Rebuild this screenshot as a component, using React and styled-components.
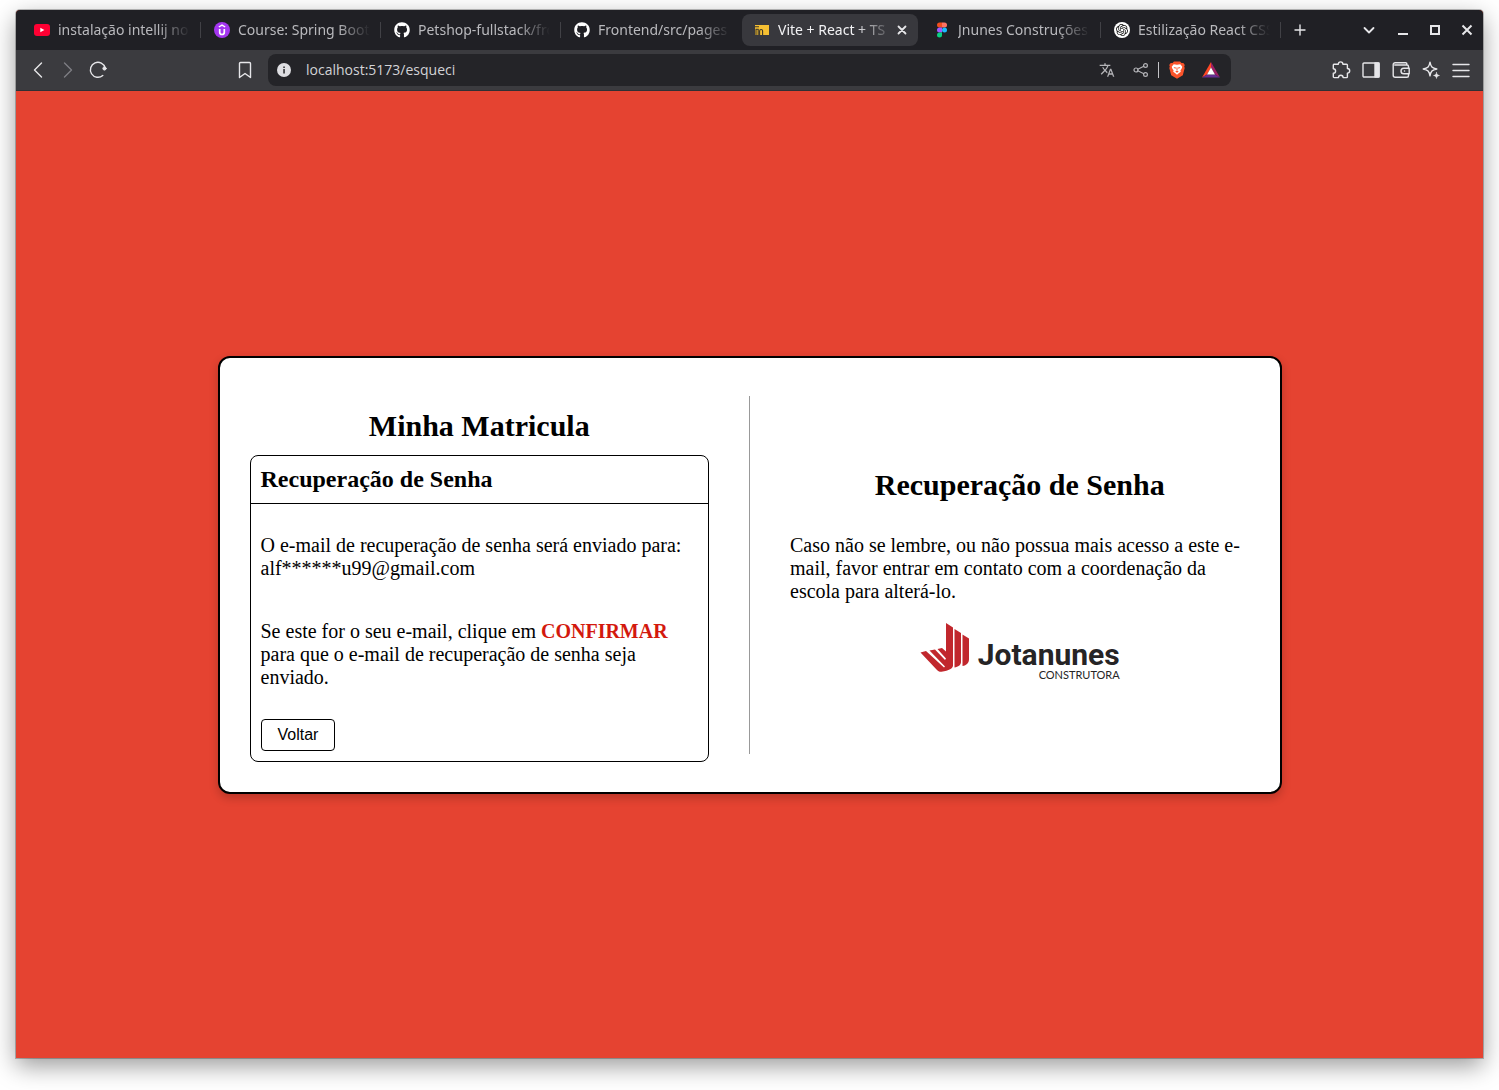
import React from "react";
import styled, { createGlobalStyle } from "styled-components";
import { FaGithub } from "react-icons/fa";
import { SiOpenai } from "react-icons/si";
import { MdTranslate } from "react-icons/md";

const GlobalStyle = createGlobalStyle`
  *, *::before, *::after { box-sizing: border-box; }
  body { margin: 0; background: #fff; font-family: "Liberation Serif", "Times New Roman", serif; color: #000; }
  h1, h2, p { margin: 0; }
  button, input { font: inherit; }
`;

const Desktop = styled.div`
  display: flex;
  min-height: 100vh;
  padding: 10px 16px 32px;
`;

const Window = styled.div`
  flex: 1;
  min-width: 0;
  display: flex;
  flex-direction: column;
  overflow: hidden;
  border-radius: 4px 4px 0 0;
  box-shadow: 0 0 0 1px rgba(0, 0, 0, 0.24), 0 8px 24px rgba(0, 0, 0, 0.4);
  background: #e54331;
`;

const TabStrip = styled.header`
  display: flex;
  align-items: center;
  height: 40px;
  background: #202025;
  font-family: "Noto Sans", "Open Sans", sans-serif;
  font-size: 14px;
`;

const TabList = styled.nav`
  display: flex;
  align-items: center;
  padding-left: 6px;
  min-width: 0;
`;

const Tab = styled.a`
  display: flex;
  align-items: center;
  gap: 8px;
  width: 180px;
  height: 32px;
  padding: 0 12px;
  color: #b9b9bd;
  text-decoration: none;
`;

const ActiveTab = styled.div`
  display: flex;
  align-items: center;
  width: 176px;
  height: 32px;
  margin-right: 4px;
  padding: 0 8px 0 12px;
  border-radius: 8px;
  background: #38383d;
  color: #f2f2f4;
`;

const ActiveLink = styled.a`
  flex: 1;
  min-width: 0;
  display: flex;
  align-items: center;
  gap: 8px;
  color: inherit;
  text-decoration: none;
`;

const TabTitle = styled.span`
  flex: 1;
  min-width: 0;
  overflow: hidden;
  white-space: nowrap;
  line-height: 20px;
  mask-image: linear-gradient(to right, #000 calc(100% - ${(p) => p.$fade || 32}px), transparent);
`;

const TabDivider = styled.span`
  width: 1px;
  height: 16px;
  margin: 0 1px 0 -2px;
  background: #414146;
`;

const Favicon = styled.svg`
  flex: none;
  width: 16px;
  height: 16px;
`;

const IconButton = styled.button`
  display: flex;
  align-items: center;
  justify-content: center;
  flex: none;
  width: ${(p) => p.$size || 30}px;
  height: ${(p) => p.$size || 30}px;
  padding: 0;
  border: 0;
  background: none;
  color: ${(p) => p.$color || "#e6e6e9"};
`;

const WindowControls = styled.div`
  display: flex;
  align-items: center;
  margin-left: auto;
`;

const Toolbar = styled.div`
  display: flex;
  align-items: center;
  height: 41px;
  padding: 0 7px;
  background: #3b3b3f;
  border-bottom: 1px solid #303034;
`;

const ToolGroup = styled.div`
  flex: 1 1 0;
  display: flex;
  justify-content: ${(p) => (p.$end ? "flex-end" : "flex-start")};
`;

const NavSpacer = styled.span`
  flex: 1;
`;

const AddressBar = styled.form`
  flex: 0 1 963px;
  min-width: 0;
  display: flex;
  align-items: center;
  height: 32px;
  margin: 0 8px;
  padding: 0 3px 0 9px;
  border-radius: 8px;
  background: #242428;
`;

const AddressInput = styled.input`
  flex: 1;
  min-width: 0;
  margin-left: 15px;
  padding: 0;
  border: 0;
  outline: 0;
  background: none;
  color: #d2d2d6;
  font-family: "Open Sans", "Noto Sans", sans-serif;
  font-size: 14px;
  line-height: 20px;
`;

const AddressDivider = styled.span`
  width: 1px;
  height: 16px;
  margin-right: 1px;
  background: #c4c4c8;
`;

const Page = styled.main`
  flex: 1;
  display: flex;
  align-items: center;
  justify-content: center;
  padding: 24px;
  background: #e54331;
`;

const Card = styled.div`
  display: flex;
  width: 100%;
  max-width: 1064px;
  padding: 30px;
  border: 2px solid #000;
  border-radius: 12px;
  background: #fff;
  box-shadow: 0 4px 10px rgba(0, 0, 0, 0.2);
`;

const Column = styled.section`
  flex: 1 1 0;
  min-width: 0;
  display: flex;
  flex-direction: column;
  justify-content: ${(p) => (p.$centered ? "center" : "flex-start")};
`;

const Divider = styled.hr`
  width: 1px;
  margin: 8px 40px;
  border: 0;
  background: #999;
`;

const Title = styled.h1`
  font-size: 30px;
  line-height: 35px;
  text-align: center;
  margin: ${(p) => p.$margin};
`;

const Panel = styled.div`
  border: 1px solid #000;
  border-radius: 8px;
`;

const PanelTitle = styled.h2`
  padding: 10px;
  border-bottom: 1px solid #000;
  font-size: 24px;
  line-height: 27px;
`;

const PanelBody = styled.div`
  padding: 10px;
`;

const Text = styled.p`
  font-size: 20px;
  line-height: normal;
  margin: ${(p) => p.$margin || "0"};
`;

const Emphasis = styled.strong`
  color: #d3190d;
`;

const BackButton = styled.button`
  height: 32px;
  padding: 0 16px;
  border: 1px solid #000;
  border-radius: 4px;
  background: #fff;
  color: #000;
  font-family: "Liberation Sans", Arial, sans-serif;
  font-size: 16px;
`;

const Brand = styled.div`
  display: flex;
  justify-content: center;
  gap: 8px;
  height: 60px;
`;

const BrandMark = styled.svg`
  width: 50px;
  height: 50px;
`;

const Wordmark = styled.div`
  display: flex;
  flex-direction: column;
  align-items: flex-end;
  padding-top: 18px;
  color: #262425;
`;

const BrandName = styled.span`
  font-family: Roboto, sans-serif;
  font-weight: 700;
  font-size: 30px;
  line-height: 28px;
`;

const BrandKind = styled.span`
  font-family: Lato, sans-serif;
  font-size: 11px;
  line-height: 12px;
`;

const line = { fill: "none", stroke: "currentColor", strokeLinecap: "round", strokeLinejoin: "round" };

const YouTubeIcon = () => (
  <Favicon viewBox="0 0 16 16" aria-hidden="true">
    <rect y="2" width="16" height="12" rx="3" fill="#ff0033" />
    <path d="M6.300 5.700v4.600L10.400 8z" fill="#fff" />
  </Favicon>
);

const UdemyIcon = () => (
  <Favicon viewBox="0 0 16 16" aria-hidden="true">
    <circle cx="8" cy="8" r="8" fill="#a435f0" />
    <path d="M4.800 5 8 3.100 11.200 5" fill="none" stroke="#fff" strokeWidth="1.300" />
    <path d="M5.700 7v3.200a2.300 2.300 0 0 0 4.600 0V7" fill="none" stroke="#fff" strokeWidth="1.700" />
  </Favicon>
);

const GithubIcon = () => <Favicon as={FaGithub} color="#fff" aria-hidden="true" />;

const ViteIcon = () => (
  <Favicon viewBox="0 0 16 16" aria-hidden="true">
    <path d="M1 3h14v10H1z" fill="#f5bf32" />
    <path d="M1 4.800h4M2 13V7.200h2.200V13M5.600 13V9a1.500 1.500 0 0 1 3 0v4" fill="none" stroke="#38342b" strokeWidth="1.100" />
  </Favicon>
);

const FigmaIcon = () => (
  <Favicon viewBox="0 0 16 16" aria-hidden="true">
    <path d="M8 .5H5.500a2.500 2.500 0 0 0 0 5H8z" fill="#f24e1e" />
    <path d="M8 .5h2.500a2.500 2.500 0 0 1 0 5H8z" fill="#ff7262" />
    <path d="M8 5.500H5.500a2.500 2.500 0 0 0 0 5H8z" fill="#a259ff" />
    <circle cx="10.500" cy="8" r="2.500" fill="#1abcfe" />
    <path d="M5.500 10.500H8V13a2.500 2.500 0 1 1-2.500-2.500z" fill="#0acf83" />
  </Favicon>
);

const OpenAiBadge = styled.span`
  display: flex;
  align-items: center;
  justify-content: center;
  flex: none;
  width: 16px;
  height: 16px;
  border-radius: 50%;
  background: #fff;
  color: #111;
`;

const OpenAiIcon = () => (
  <OpenAiBadge>
    <SiOpenai size={12} aria-hidden="true" />
  </OpenAiBadge>
);

const Glyph = ({ size = 20, children }) => (
  <svg width={size} height={size} viewBox={`0 0 ${size} ${size}`} strokeWidth="1.4" {...line} aria-hidden="true">
    {children}
  </svg>
);

const InfoIcon = () => (
  <svg width="14" height="14" viewBox="0 0 14 14" aria-hidden="true">
    <circle cx="7" cy="7" r="7" fill="#dedee2" />
    <path d="M6.200 3.500h1.700v1.500H6.200zM6.200 6h1.700v4.500H6.200z" fill="#3b3b3f" />
  </svg>
);

const BraveIcon = () => (
  <svg width="16" height="18" viewBox="0 0 16 18" aria-hidden="true">
    <path d="M5 .5h6l1.500 1.600 1.800-.2 1.500 2-.6 1.700.5 1.500-1.900 7.200L8 17.800l-5.800-3.500L.3 7.100l.5-1.500L.2 3.900l1.500-2 1.800.2z" fill="#fb542b" />
    <path d="M4.700 3.200 8 3.700l3.300-.5 2 2.500-.6 1.700-1.300 2 .4 1.300-1.800 1.300L8 13.700 6 12 4.200 10.700l.4-1.300-1.300-2-.6-1.700z" fill="#fff" />
    <path d="M4.500 6 7 6.500l-.8 1.500zM11.500 6 9 6.500l.8 1.500zM7.500 6.500h1v3h-1zM6.200 10.600 8 9.800l1.800.8L8 11.700z" fill="#fb542b" />
  </svg>
);

const BatIcon = () => (
  <svg width="18" height="16" viewBox="0 0 18 16" aria-hidden="true">
    <path d="M9 0 0 15.500l5-3L9 5.500z" fill="#ff4724" />
    <path d="M9 0l9 15.500-5-3L9 5.500z" fill="#9e1f63" />
    <path d="M0 15.500h18l-5-3H5z" fill="#662d91" />
    <path d="M9 5.500 5 12.500h8z" fill="#fff" />
  </svg>
);

const tabsBefore = [
  { title: "instalação intellij no ubuntu", Icon: YouTubeIcon },
  { title: "Course: Spring Boot 3", Icon: UdemyIcon },
  { title: "Petshop-fullstack/frontend", Icon: GithubIcon },
  { title: "Frontend/src/pages at", Icon: GithubIcon, last: true },
];

const tabsAfter = [
  { title: "Jnunes Construções", Icon: FigmaIcon },
  { title: "Estilização React CSS", Icon: OpenAiIcon },
];

const BrowserTab = ({ title, Icon, last }) => (
  <>
    <Tab href="#">
      <Icon />
      <TabTitle>{title}</TabTitle>
    </Tab>
    {!last && <TabDivider />}
  </>
);

const Tabs = () => (
  <TabStrip>
    <TabList aria-label="Abas">
      {tabsBefore.map((tab) => (
        <BrowserTab key={tab.title} {...tab} />
      ))}
      <ActiveTab>
        <ActiveLink href="#">
          <ViteIcon />
          <TabTitle $fade={40}>Vite + React + TS</TabTitle>
        </ActiveLink>
        <IconButton $size={16} aria-label="Fechar aba">
          <Glyph size={16}>
            <path d="M4.500 4.500l7 7m0-7l-7 7" strokeWidth="1.800" />
          </Glyph>
        </IconButton>
      </ActiveTab>
      {tabsAfter.map((tab) => (
        <BrowserTab key={tab.title} {...tab} />
      ))}
    </TabList>
    <IconButton $size={36} aria-label="Nova aba">
      <Glyph><path d="M10 5v10M5 10h10" /></Glyph>
    </IconButton>
    <WindowControls>
      <IconButton $size={36} aria-label="Pesquisar abas">
        <Glyph><path d="M5.500 8l4.500 4.500L14.500 8" strokeWidth="1.800" /></Glyph>
      </IconButton>
      <IconButton $size={32} aria-label="Minimizar">
        <Glyph><path d="M5 14h10" strokeWidth="2" strokeLinecap="butt" /></Glyph>
      </IconButton>
      <IconButton $size={32} aria-label="Maximizar">
        <Glyph><path d="M6 6h8v8H6z" strokeWidth="2" strokeLinejoin="miter" /></Glyph>
      </IconButton>
      <IconButton $size={32} aria-label="Fechar">
        <Glyph><path d="M5.500 5.500l9 9m0-9l-9 9" strokeWidth="2" strokeLinecap="butt" /></Glyph>
      </IconButton>
    </WindowControls>
  </TabStrip>
);

const NavigationBar = () => (
  <Toolbar>
    <ToolGroup>
      <IconButton aria-label="Voltar página">
        <Glyph><path d="M13.500 3 6.500 10l7 7" /></Glyph>
      </IconButton>
      <IconButton $color="#7e7e83" aria-label="Avançar página">
        <Glyph><path d="M6.500 3l7 7-7 7" /></Glyph>
      </IconButton>
      <IconButton aria-label="Recarregar">
        <Glyph>
          <path d="M14.800 15.500A7.500 7.500 0 1 1 17.200 8" />
          <circle cx="16.500" cy="8.500" r="1.600" fill="currentColor" strokeWidth="1" />
        </Glyph>
      </IconButton>
      <NavSpacer />
      <IconButton aria-label="Adicionar aos favoritos">
        <Glyph><path d="M4.500 3.500a1 1 0 0 1 1-1h9a1 1 0 0 1 1 1v14L10 13.500l-5.500 4z" /></Glyph>
      </IconButton>
    </ToolGroup>
    <AddressBar>
      <InfoIcon />
      <AddressInput aria-label="Endereço" defaultValue="localhost:5173/esqueci" />
      <IconButton $size={34} $color="#b4b4b8" type="button" aria-label="Traduzir">
        <MdTranslate size={16} />
      </IconButton>
      <IconButton $size={34} $color="#b4b4b8" type="button" aria-label="Compartilhar">
        <Glyph size={16}>
          <g strokeWidth="1.200">
            <circle cx="3" cy="8" r="2" />
            <circle cx="12.500" cy="3.500" r="1.900" />
            <circle cx="12.500" cy="12.500" r="1.900" />
            <path d="M4.800 7.200 10.800 4.300M4.800 8.800l6 2.900" />
          </g>
        </Glyph>
      </IconButton>
      <AddressDivider />
      <IconButton $size={34} type="button" aria-label="Brave Shields">
        <BraveIcon />
      </IconButton>
      <IconButton $size={34} type="button" aria-label="Brave Rewards">
        <BatIcon />
      </IconButton>
    </AddressBar>
    <ToolGroup $end>
      <IconButton aria-label="Extensões">
        <Glyph>
          <path d="M3 4.200h4.300a2.300 2.300 0 0 1 4.600 0h3.600a.9.9 0 0 1 .9.900v3.400a2.300 2.300 0 0 1 0 4.600v3.600a.9.900 0 0 1-.9.900h-3.400a2.300 2.300 0 0 0-4.600 0H3.200a.9.900 0 0 1-.9-.9v-3.400a2.300 2.300 0 0 0 0-4.600V5a.9.900 0 0 1 .7-.8z" />
        </Glyph>
      </IconButton>
      <IconButton aria-label="Barra lateral">
        <Glyph>
          <rect x="2" y="3" width="16" height="14" rx="1" />
          <path d="M14 3h4v14h-4z" fill="currentColor" />
        </Glyph>
      </IconButton>
      <IconButton aria-label="Carteira">
        <Glyph>
          <path d="M17.500 8V6.500a1.500 1.500 0 0 0-1.500-1.500H3.700M15.800 5V3.700a1 1 0 0 0-1-1H4.200a2 2 0 0 0-2 2v10.600a2 2 0 0 0 2 2H16a1.500 1.500 0 0 0 1.500-1.500V14" />
          <path d="M18.200 8.200h-5.400a2.700 2.700 0 0 0 0 5.600h5.400zM13.500 11h.1" />
        </Glyph>
      </IconButton>
      <IconButton aria-label="Assistente Leo">
        <Glyph>
          <path d="M9 2.200c.8 4.500 2 5.900 6.800 6.800-4.700.9-6 2.200-6.800 6.800-.8-4.600-2.100-5.900-6.800-6.800C7 8.100 8.200 6.700 9 2.200z" />
          <path d="M15.500 12.500c.4 1.900 1 2.500 3 3-2 .5-2.600 1.100-3 3-.4-1.900-1-2.500-3-3 2-.5 2.600-1.100 3-3z" fill="currentColor" strokeWidth=".5" />
        </Glyph>
      </IconButton>
      <IconButton aria-label="Menu">
        <Glyph><path d="M2 4.500h16M2 10.500h16M2 16.500h16" /></Glyph>
      </IconButton>
    </ToolGroup>
  </Toolbar>
);

const JotanunesLogo = () => (
  <Brand>
    <BrandMark viewBox="0 0 50 50" aria-hidden="true">
      <g fill="#c1272d">
        <path d="M26 0 33 4.500v38c0 3-4 5-11.500 6.300-2 .2-3.500-.8-5-2.300L.5 29.500l5.500-1.500 18 16.500 1-1L9.500 27.500l5.500-1 10 10.500 1-1.500L17.500 26l4.500-1 4 3.500z" />
        <path d="M34.500 6l6.500 4v29c0 3-3 5-6.500 5.500z" />
        <path d="M42.500 11.500l6.500 4V36c0 4-2.500 6.500-6.500 7z" />
      </g>
    </BrandMark>
    <Wordmark>
      <BrandName>Jotanunes</BrandName>
      <BrandKind>CONSTRUTORA</BrandKind>
    </Wordmark>
  </Brand>
);

export default function App() {
  return (
    <>
      <GlobalStyle />
      <Desktop>
        <Window>
          <Tabs />
          <NavigationBar />
          <Page>
            <Card>
              <Column>
                <Title $margin="20px 0 12px">Minha Matricula</Title>
                <Panel>
                  <PanelTitle>Recuperação de Senha</PanelTitle>
                  <PanelBody>
                    <Text $margin="20px 0 40px">
                      O e-mail de recuperação de senha será enviado para: alf******u99@gmail.com
                    </Text>
                    <Text $margin="0 0 30px">
                      Se este for o seu e-mail, clique em <Emphasis>CONFIRMAR</Emphasis> para que o e-mail de
                      recuperação de senha seja enviado.
                    </Text>
                    <BackButton type="button">Voltar</BackButton>
                  </PanelBody>
                </Panel>
              </Column>
              <Divider />
              <Column $centered>
                <Title $margin="0 0 32px">Recuperação de Senha</Title>
                <Text $margin="0 0 20px">
                  Caso não se lembre, ou não possua mais acesso a este e-mail, favor entrar em contato com a
                  coordenação da escola para alterá-lo.
                </Text>
                <JotanunesLogo />
              </Column>
            </Card>
          </Page>
        </Window>
      </Desktop>
    </>
  );
}
